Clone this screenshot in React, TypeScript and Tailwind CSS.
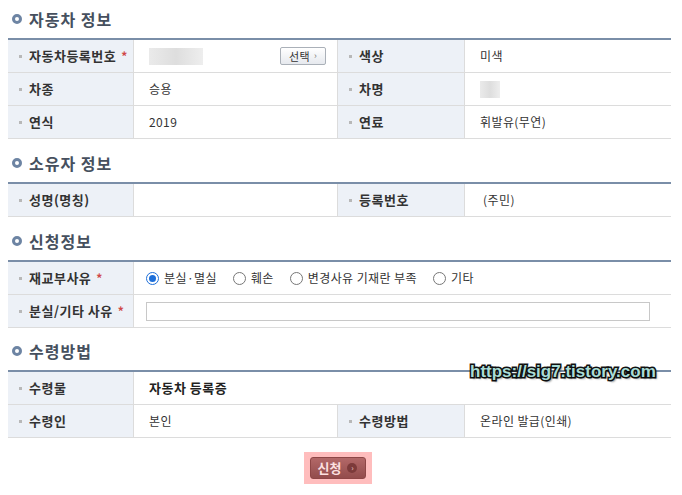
import React from 'react';

const font = { fontFamily: '"Noto Sans CJK KR", "Noto Sans", sans-serif' };

const SectionTitle: React.FC<{ title: string; mt: string }> = ({ title, mt }) => (
  <div className={`flex items-center h-6 gap-[7px] pl-[4px] mb-[7px] ${mt}`}>
    <span className="w-[10px] h-[10px] rounded-full border-[3px] border-[#6d84a3] bg-white" />
    <span className="text-[16px] font-bold text-[#46505e] tracking-[1px]">{title}</span>
  </div>
);

const Label: React.FC<{ text: string; req?: boolean; w?: string }> = ({ text, req, w = 'w-[126px]' }) => (
  <div className={`${w} shrink-0 bg-[#edf1f7] border-r border-[#dcdcdc] flex items-center pl-[11px] gap-[7px]`}>
    <span className="w-[3px] h-[3px] bg-[#b8b8b8]" />
    <span className="text-[13px] font-bold text-[#333] tracking-[0.5px]">{text}</span>
    {req && <span className="text-[12px] font-bold text-[#d04848] -ml-[2px]">*</span>}
  </div>
);

const Value: React.FC<{ children?: React.ReactNode; className?: string }> = ({ children, className = 'w-[204px]' }) => (
  <div className={`${className} shrink-0 flex items-center pl-[15px] pr-[11px] text-[12px] text-[#333] tracking-[0.4px] border-r border-[#dcdcdc] last:border-r-0`}>
    {children}
  </div>
);

const Row: React.FC<{ children: React.ReactNode }> = ({ children }) => (
  <div className="flex h-[33px] border-b border-[#dcdcdc]">{children}</div>
);

const Table: React.FC<{ children: React.ReactNode }> = ({ children }) => (
  <div className="border-t-2 border-[#7a8ea8]">{children}</div>
);

const Blur: React.FC<{ w: string }> = ({ w }) => (
  <span className={`${w} h-[17px] inline-block bg-gradient-to-r from-[#e8e8e8] via-[#dadada] to-[#ececec] opacity-90`} />
);

const Radio: React.FC<{ label: string; checked?: boolean }> = ({ label, checked }) => (
  <label className="flex items-center gap-[5px] mr-[16px]">
    {checked ? (
      <span className="w-[13px] h-[13px] rounded-full border border-[#1e6fd9] bg-white flex items-center justify-center">
        <span className="w-[7px] h-[7px] rounded-full bg-[#1e6fd9]" />
      </span>
    ) : (
      <span className="w-[13px] h-[13px] rounded-full border border-[#777] bg-white" />
    )}
    <span>{label}</span>
  </label>
);

export default function App() {
  return (
    <div className="relative w-[682px] h-[495px] bg-white overflow-hidden" style={font}>
      <div className="ml-2 w-[663px]">
        <SectionTitle title="자동차 정보" mt="mt-[7px]" />
        <Table>
          <Row>
            <Label text="자동차등록번호" req w="w-[126px]" />
            <Value>
              <div className="flex items-center justify-between w-full">
                <Blur w="w-[54px]" />
                <button className="h-[18px] w-[46px] border border-[#aab0b8] rounded-[2px] bg-gradient-to-b from-white to-[#e6e9ee] text-[11px] text-[#333] flex items-center justify-center gap-[4px]">
                  선택<span className="text-[9px] text-[#777]">›</span>
                </button>
              </div>
            </Value>
            <Label text="색상" w="w-[127px]" />
            <Value className="flex-1">미색</Value>
          </Row>
          <Row>
            <Label text="차종" />
            <Value>승용</Value>
            <Label text="차명" w="w-[127px]" />
            <Value className="flex-1"><Blur w="w-[20px]" /></Value>
          </Row>
          <Row>
            <Label text="연식" />
            <Value>2019</Value>
            <Label text="연료" w="w-[127px]" />
            <Value className="flex-1">휘발유(무연)</Value>
          </Row>
        </Table>

        <SectionTitle title="소유자 정보" mt="mt-[12px]" />
        <Table>
          <Row>
            <Label text="성명(명칭)" />
            <Value></Value>
            <Label text="등록번호" w="w-[127px]" />
            <Value className="flex-1">&nbsp;(주민)</Value>
          </Row>
        </Table>

        <SectionTitle title="신청정보" mt="mt-[12px]" />
        <Table>
          <Row>
            <Label text="재교부사유" req />
            <Value className="flex-1 !pl-[12px]">
              <Radio label="분실·멸실" checked />
              <Radio label="훼손" />
              <Radio label="변경사유 기재란 부족" />
              <Radio label="기타" />
            </Value>
          </Row>
          <Row>
            <Label text="분실/기타 사유" req />
            <Value className="flex-1 !pl-[12px] !pr-[21px]">
              <input className="w-full h-[19px] border border-[#c8c8c8] bg-white" />
            </Value>
          </Row>
        </Table>

        <SectionTitle title="수령방법" mt="mt-[11px]" />
        <Table>
          <Row>
            <Label text="수령물" />
            <Value className="flex-1"><span className="text-[13px] font-bold text-[#222] tracking-[0.5px]">자동차 등록증</span></Value>
          </Row>
          <Row>
            <Label text="수령인" />
            <Value>본인</Value>
            <Label text="수령방법" w="w-[127px]" />
            <Value className="flex-1">온라인 발급(인쇄)</Value>
          </Row>
        </Table>

        <div className="flex justify-center mt-[14px] ml-[-4px]">
          <div className="bg-[#ffbdbd] px-[6px] py-[5px]">
            <button className="h-[22px] w-[56px] rounded-[3px] border border-[#8e4646] bg-gradient-to-b from-[#b36868] to-[#934c4c] flex items-center justify-center gap-[6px]">
              <span className="text-[13px] font-bold text-[#fde0e0]">신청</span>
              <span className="w-[10px] h-[10px] rounded-full bg-[#7c3a3a] text-[8px] leading-[10px] text-[#f4d0d0] text-center">›</span>
            </button>
          </div>
        </div>
      </div>

      <div
        className="absolute left-[470px] top-[359px] text-[17px] font-bold text-[#a9dcd6]"
        style={{
          fontFamily: '"Liberation Sans", Arial, sans-serif',
          WebkitTextStroke: '3px #111',
          paintOrder: 'stroke fill',
          textShadow: '2px 2px 2px rgba(0,0,0,0.45)',
        }}
      >
        https://sig7.tistory.com
      </div>
    </div>
  );
}
